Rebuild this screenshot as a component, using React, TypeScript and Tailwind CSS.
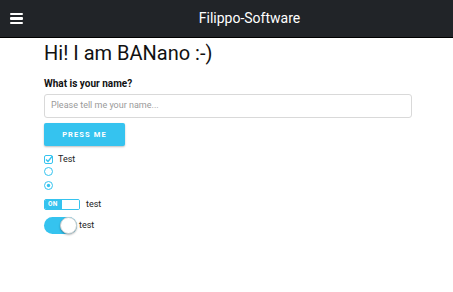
import React from 'react';

export default function App() {
  return (
    <div className="w-[453px] h-[292px] bg-white font-['Roboto',sans-serif] text-[#212529]">
      {/* navbar */}
      <div className="h-[38px] bg-[#212428] border-b border-black flex items-center relative">
        <div className="ml-[10px] flex flex-col gap-[2px]">
          <span className="block w-[13px] h-[2.5px] bg-white rounded-[1px]"></span>
          <span className="block w-[13px] h-[2.5px] bg-white rounded-[1px]"></span>
          <span className="block w-[13px] h-[2.5px] bg-white rounded-[1px]"></span>
        </div>
        <div className="absolute left-0 right-0 top-0 h-[37px] flex items-center justify-center pl-[46px] text-white text-[14px]">
          Filippo-Software
        </div>
      </div>

      <div className="pl-[44px] pr-[41px]">
        <h1 className="text-[20px] leading-[24px] mt-[3px] text-[#111]">Hi! I am BANano :-)</h1>
        <div className="mt-[13px] text-[10px] font-bold leading-[12px] text-[#111]">What is your name?</div>
        <div className="mt-[4px] h-[24px] border border-[#d9d9d9] rounded-[3px] flex items-center px-[6px] text-[9px] text-[#9a9a9a]">
          Please tell me your name...
        </div>
        <button className="mt-[5px] w-[81px] h-[23px] bg-[#35c3ef] rounded-[2px] shadow-[0_1px_2px_rgba(0,0,0,0.25)] text-white text-[7.5px] font-bold tracking-[0.15em] flex items-center justify-center">
          PRESS ME
        </button>

        <div className="mt-[9px] flex items-center h-[9px]">
          <svg width="9" height="9" viewBox="0 0 9 9">
            <rect x="0.5" y="0.5" width="8" height="8" rx="1.5" fill="white" stroke="#35c3ef" />
            <path d="M2 4.5 L4 6.5 L8.5 1" fill="none" stroke="#35c3ef" strokeWidth="1.5" />
          </svg>
          <span className="ml-[5px] text-[9px] text-[#222]">Test</span>
        </div>
        <div className="mt-[3px] h-[9px]">
          <svg width="9" height="9" viewBox="0 0 9 9">
            <circle cx="4.5" cy="4.5" r="4" fill="white" stroke="#35c3ef" />
          </svg>
        </div>
        <div className="mt-[5px] h-[9px]">
          <svg width="9" height="9" viewBox="0 0 9 9">
            <circle cx="4.5" cy="4.5" r="4" fill="white" stroke="#35c3ef" />
            <circle cx="4.5" cy="4.5" r="1.7" fill="#35c3ef" />
          </svg>
        </div>

        <div className="mt-[9px] flex items-center h-[11px]">
          <div className="w-[36px] h-[11px] border border-[#35c3ef] rounded-[2px] flex overflow-hidden">
            <div className="w-[17px] bg-[#35c3ef] text-white text-[6.5px] font-bold tracking-[0.05em] flex items-center pl-[3px]">ON</div>
            <div className="flex-1 bg-white"></div>
          </div>
          <span className="ml-[6px] text-[9px] text-[#222]">test</span>
        </div>

        <div className="mt-[7px] flex items-center">
          <div className="w-[33px] h-[17px] rounded-full bg-[#35c3ef] relative">
            <div className="absolute right-0 top-0 w-[17px] h-[17px] rounded-full bg-white border border-[#cfcfcf] shadow-[0_1px_2px_rgba(0,0,0,0.3)]"></div>
          </div>
          <span className="ml-[2px] text-[9px] text-[#222]">test</span>
        </div>
      </div>
    </div>
  );
}
